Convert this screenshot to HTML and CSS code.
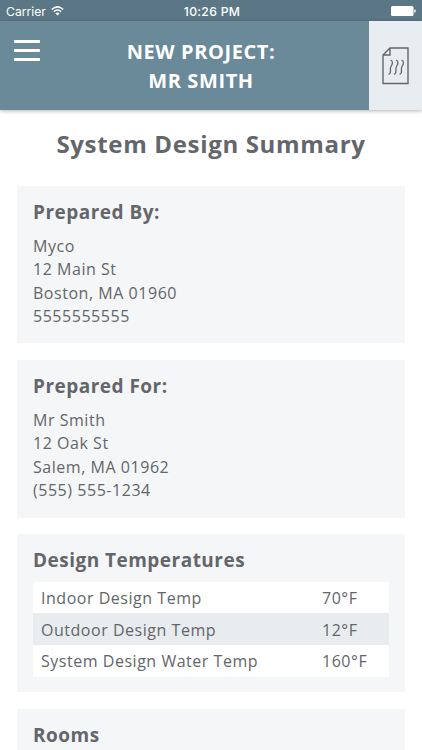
FILE: index.html
```html
<!DOCTYPE html>
<html lang="en">
<head>
<meta charset="utf-8">
<title>System Design Summary</title>
<link rel="stylesheet" href="styles.css">
</head>
<body>
<div class="status">
  <div class="carrier"><span>Carrier</span>
    <svg width="13" height="10" viewBox="0 0 13 10" fill="none" stroke="#fff" stroke-width="1.5"><path d="M.8 3.500Q6.500-1.700 12.200 3.500M2.800 5.700Q6.500 2.400 10.200 5.700"/><path d="M4.400 7.400Q6.500 5.600 8.600 7.400L6.500 9.600Z" fill="#fff" stroke="none"/></svg>
  </div>
  <div class="time">10:26 PM</div>
  <svg class="battery" width="25" height="10" viewBox="0 0 25 10" fill="#fff"><rect width="22.500" height="10" rx="1.500"/><path d="M23.300 3.200q1.500.3 1.500 1.800t-1.500 1.800z"/></svg>
</div>
<header class="header">
  <button class="menu" aria-label="Menu"><i></i><i></i><i></i></button>
  <div class="title">NEW PROJECT:<br>MR SMITH</div>
  <div class="report">
    <svg width="27" height="38" viewBox="0 0 27 38" fill="none" stroke="#65686b" stroke-width="1.400"><path d="M8 1H26V36.500H1V8zM8 1v7H1"/><path stroke-width="1.300" d="M8.500 13C11.500 14 10.500 17 9 19.500C7 23 10.500 26 6.500 27.500M14 13C17 14 16 17 14.500 19.500C12.500 23 16 26 12 27.500M19.500 13C22.500 14 21.500 17 20 19.500C18 23 21.500 26 17.500 27.500"/></svg>
  </div>
</header>
<main>
  <h1>System Design Summary</h1>
  <section class="card"><h2>Prepared By:</h2><p>Myco<br>12 Main St<br>Boston, MA 01960<br>5555555555</p></section>
  <section class="card"><h2>Prepared For:</h2><p>Mr Smith<br>12 Oak St<br>Salem, MA 01962<br>(555) 555-1234</p></section>
  <section class="card temps"><h2>Design Temperatures</h2>
    <div class="table">
      <div class="row"><span>Indoor Design Temp</span><span>70°F</span></div>
      <div class="row"><span>Outdoor Design Temp</span><span>12°F</span></div>
      <div class="row"><span>System Design Water Temp</span><span>160°F</span></div>
    </div>
  </section>
  <section class="card rooms"><h2>Rooms</h2></section>
</main>
</body>
</html>
```
FILE: styles.css
```css
* { box-sizing: border-box; }
body { margin: 0; height: 750px; display: flex; flex-direction: column; background: #fff; color: #63666a; font-family: "Open Sans", sans-serif; }
.status { flex: none; height: 21px; background: #5b7785; color: #fff; display: grid; grid-template-columns: 1fr auto 1fr; align-items: center; padding: 0 6px; font: 12px/21px Inter, sans-serif; }
.carrier { display: flex; align-items: center; gap: 5px; font-size: 12.2px; }
.time { font-weight: 500; letter-spacing: .3px; font-size: 12.2px; padding: 1px 0 0 2px; }
.battery { justify-self: end; }
.header { flex: none; height: 89px; background: #6a8999; display: grid; grid-template-columns: 54px 1fr 53px; box-shadow: 0 1px 4px rgba(0,0,0,.3); }
.menu { background: none; border: 0; padding: 19px 0 0 14px; display: flex; flex-direction: column; gap: 6px; }
.menu i { width: 26px; height: 3px; border-radius: 1px; background: #fff; }
.title { color: #fff; font-size: 20px; line-height: 29px; font-weight: 700; text-align: center; padding-top: 16px; padding-right: 21px; letter-spacing: .6px; }
.report { background: #e8edf1; display: flex; align-items: center; justify-content: center; }
main { flex: 1; min-height: 0; display: flex; flex-direction: column; padding: 16px 16.6px 0; }
h1 { flex: none; margin: 0 0 23.7px; font-size: 24px; line-height: 36px; font-weight: 700; text-align: center; letter-spacing: .67px; }
.card { flex: none; background: #f5f6f8; height: 157.7px; margin-bottom: 16.7px; padding: 12.2px 16.4px; }
.rooms { flex: 1; height: auto; min-height: 0; margin: 0; padding-bottom: 0; }
h2 { margin: 0 0 8.7px; font-size: 19px; line-height: 28px; font-weight: 700; letter-spacing: .48px; }
p { margin: 0; font-size: 16px; line-height: 23.5px; letter-spacing: .54px; }
.temps { padding-top: 11.8px; }
.temps h2 { margin-bottom: 7.4px; }
.row { background: #fff; height: 31.7px; display: grid; grid-template-columns: 281px 1fr; align-items: center; padding: .8px 0 0 8px; font-size: 16px; letter-spacing: .53px; }
.row:nth-child(2) { background: #e8ecef; }
```
